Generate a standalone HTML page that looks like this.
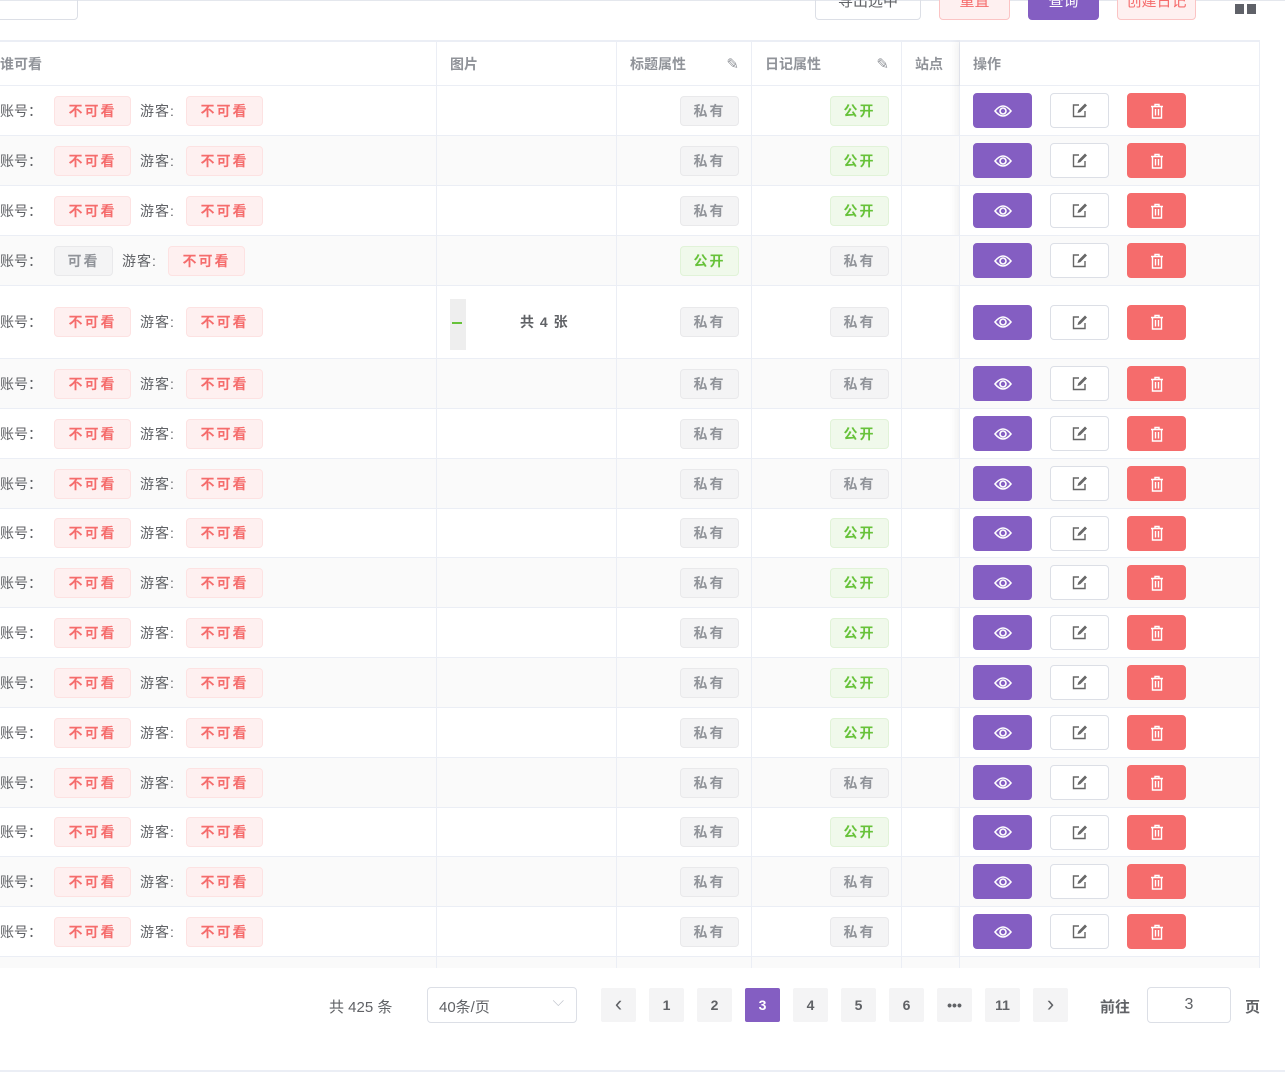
<!DOCTYPE html>
<html><head><meta charset="utf-8"><style>
*{box-sizing:border-box;margin:0;padding:0}
body{width:1285px;height:1073px;background:#fff;font-family:"Liberation Sans","Noto Sans CJK SC",sans-serif;position:relative;overflow:hidden;color:#606266;font-size:14px}
.a{position:absolute}
.tb{position:absolute;top:-14px;height:34px;border-radius:4px;font-size:15px;text-align:center;line-height:30px;border:1px solid}
.tbl{position:absolute;left:0;top:40px;width:1260px;height:928px;border-top:2px solid #ebeef5;border-right:1px solid #ebeef5;overflow:hidden}
.row{position:absolute;left:0;width:1260px;display:flex;border-bottom:1px solid #ebeef5}
.row.g{background:#fafafa}
.c{display:flex;align-items:center;border-right:1px solid #ebeef5;height:100%}
.c1{width:437px}.c2{width:180px}.c3{width:135px;justify-content:flex-end;padding-right:12px}.c4{width:150px;justify-content:flex-end;padding-right:12px}.c5{width:58px}
.c6{width:300px;padding-left:13px;border-right:none;position:relative}
.t{display:inline-block;height:30px;line-height:28px;border-radius:4px;border:1px solid;font-size:14px;letter-spacing:2px;font-weight:bold;text-align:center;padding:0}
.n{color:#f56c6c;background:#fef0f0;border-color:#fde2e2;width:77px}
.p{color:#909399;background:#f4f4f5;border-color:#e9e9eb;width:59px}
.o{color:#67c23a;background:#f0f9eb;border-color:#e1f3d8;width:59px}
.lb{display:inline-block;width:54px;color:#606266;margin:0 !important}
.c1 .t + .lb{width:40px;margin-left:9px !important;margin-right:6px !important;letter-spacing:1px}
.b{width:59px;height:35px;border-radius:4px;display:flex;align-items:center;justify-content:center;margin-right:18px;border:1px solid}
.bv{background:#845ec2;border-color:#845ec2}.be{background:#fff;border-color:#dcdfe6}.bd{background:#f56c6c;border-color:#f56c6c}
.hd{position:absolute;left:0;top:0;height:44px;width:1260px;display:flex;border-bottom:1px solid #ebeef5;font-weight:bold;color:#909399}
.hd .c{padding-left:13px}
.ops{position:absolute;left:960px;top:0;width:300px;height:100%;box-shadow:-4px 0 8px rgba(0,0,0,.06)}
.pg{position:absolute;top:988px;width:35px;height:34px;background:#f4f4f5;border-radius:2px;text-align:center;line-height:34px;font-size:14px;color:#606266;font-weight:bold}
.ar{font-size:22px;font-weight:normal;line-height:32px}
</style></head><body>
<div class="a" style="left:0;top:0;width:1285px;height:1px;background:#e4e7ed"></div>
<div class="a" style="left:-10px;top:-10px;width:88px;height:30px;border:1px solid #dcdfe6;border-radius:4px"></div>
<div class="tb" style="left:815px;width:106px;border-color:#dcdfe6;color:#606266">导出选中</div>
<div class="tb" style="left:939px;width:71px;border-color:#fbc4c4;background:#fef0f0;color:#f56c6c">重置</div>
<div class="tb" style="left:1028px;width:71px;border-color:#845ec2;background:#845ec2;color:#fff">查询</div>
<div class="tb" style="left:1117px;width:79px;border-color:#fbc4c4;background:#fef0f0;color:#f56c6c">创建日记</div>
<div class="a" style="left:1235px;top:4px;width:9px;height:10px;background:#5f6168"></div>
<div class="a" style="left:1247px;top:4px;width:9px;height:10px;background:#5f6168"></div>

<div class="tbl">
<div class="hd"><div class="c c1" style="padding-left:0">谁可看</div><div class="c c2">图片</div><div class="c c3" style="justify-content:space-between">标题属性<span style="font-weight:normal;font-size:15px">✎</span></div><div class="c c4" style="justify-content:space-between">日记属性<span style="font-weight:normal;font-size:15px">✎</span></div><div class="c c5">站点</div><div class="c c6">操作</div></div>
</div>

<div class="a" style="left:0;top:968px;width:1285px;height:105px;background:#fff"></div>
<div class="a" style="left:0;top:1070px;width:1285px;height:2px;background:#ebeef5"></div>
<div class="a" style="left:329px;top:996px;font-size:15px">共 425 条</div>
<div class="a" style="left:427px;top:987px;width:150px;height:36px;border:1px solid #dcdfe6;border-radius:4px;padding:8px 11px;font-size:15px">40条/页<span style="position:absolute;right:12px;top:5px;color:#c0c4cc">⌵</span></div>
<div class="pg ar" style="left:601px">‹</div>
<div class="pg" style="left:649px">1</div>
<div class="pg" style="left:697px">2</div>
<div class="pg" style="left:745px;background:#845ec2;color:#fff">3</div>
<div class="pg" style="left:793px">4</div>
<div class="pg" style="left:841px">5</div>
<div class="pg" style="left:889px">6</div>
<div class="pg" style="left:937px">•••</div>
<div class="pg" style="left:985px">11</div>
<div class="pg ar" style="left:1033px">›</div>
<div class="a" style="left:1100px;top:996px;font-size:15px;font-weight:bold">前往</div>
<div class="a" style="left:1147px;top:987px;width:84px;height:36px;border:1px solid #dcdfe6;border-radius:4px;text-align:center;line-height:34px;font-size:16px">3</div>
<div class="a" style="left:1245px;top:996px;font-size:15px;font-weight:bold">页</div>

<div class="tbl" style="border:none;background:transparent;pointer-events:none">
<div class="ops"></div>
</div>

<div class="tbl" style="border-top:none;background:transparent">
<div class="row" style="top:46px;height:50px"><div class="c c1"><span class="lb">账号：</span><span class="t n">不可看</span><span class="lb">游客:</span><span class="t n">不可看</span></div><div class="c c2"></div><div class="c c3"><span class="t p">私有</span></div><div class="c c4"><span class="t o">公开</span></div><div class="c c5"></div><div class="c c6"><span class="b bv"><svg width="18" height="14" viewBox="0 0 18 14"><path d="M1 7Q9-3 17 7Q9 17 1 7Z" fill="none" stroke="#fff" stroke-width="1.6"/><circle cx="9" cy="7" r="3" fill="none" stroke="#fff" stroke-width="1.6"/></svg></span><span class="b be"><svg width="15" height="15"><path d="M7 2H1.5V13.5H13V8M13 1.5L7 7.5L6.5 9L8 8.5L14 2.5Z" fill="none" stroke="#666" stroke-width="1.4"/></svg></span><span class="b bd"><svg width="14" height="16"><path d="M1 3.5H13M5 3.5V1.5H9V3.5M2.5 3.5V15H11.5V3.5M5.5 6V12.5M8.5 6V12.5" fill="none" stroke="#fff" stroke-width="1.4"/></svg></span></div></div>
<div class="row g" style="top:96px;height:50px"><div class="c c1"><span class="lb">账号：</span><span class="t n">不可看</span><span class="lb">游客:</span><span class="t n">不可看</span></div><div class="c c2"></div><div class="c c3"><span class="t p">私有</span></div><div class="c c4"><span class="t o">公开</span></div><div class="c c5"></div><div class="c c6"><span class="b bv"><svg width="18" height="14" viewBox="0 0 18 14"><path d="M1 7Q9-3 17 7Q9 17 1 7Z" fill="none" stroke="#fff" stroke-width="1.6"/><circle cx="9" cy="7" r="3" fill="none" stroke="#fff" stroke-width="1.6"/></svg></span><span class="b be"><svg width="15" height="15"><path d="M7 2H1.5V13.5H13V8M13 1.5L7 7.5L6.5 9L8 8.5L14 2.5Z" fill="none" stroke="#666" stroke-width="1.4"/></svg></span><span class="b bd"><svg width="14" height="16"><path d="M1 3.5H13M5 3.5V1.5H9V3.5M2.5 3.5V15H11.5V3.5M5.5 6V12.5M8.5 6V12.5" fill="none" stroke="#fff" stroke-width="1.4"/></svg></span></div></div>
<div class="row" style="top:146px;height:50px"><div class="c c1"><span class="lb">账号：</span><span class="t n">不可看</span><span class="lb">游客:</span><span class="t n">不可看</span></div><div class="c c2"></div><div class="c c3"><span class="t p">私有</span></div><div class="c c4"><span class="t o">公开</span></div><div class="c c5"></div><div class="c c6"><span class="b bv"><svg width="18" height="14" viewBox="0 0 18 14"><path d="M1 7Q9-3 17 7Q9 17 1 7Z" fill="none" stroke="#fff" stroke-width="1.6"/><circle cx="9" cy="7" r="3" fill="none" stroke="#fff" stroke-width="1.6"/></svg></span><span class="b be"><svg width="15" height="15"><path d="M7 2H1.5V13.5H13V8M13 1.5L7 7.5L6.5 9L8 8.5L14 2.5Z" fill="none" stroke="#666" stroke-width="1.4"/></svg></span><span class="b bd"><svg width="14" height="16"><path d="M1 3.5H13M5 3.5V1.5H9V3.5M2.5 3.5V15H11.5V3.5M5.5 6V12.5M8.5 6V12.5" fill="none" stroke="#fff" stroke-width="1.4"/></svg></span></div></div>
<div class="row g" style="top:196px;height:50px"><div class="c c1"><span class="lb">账号：</span><span class="t p">可看</span><span class="lb">游客:</span><span class="t n">不可看</span></div><div class="c c2"></div><div class="c c3"><span class="t o">公开</span></div><div class="c c4"><span class="t p">私有</span></div><div class="c c5"></div><div class="c c6"><span class="b bv"><svg width="18" height="14" viewBox="0 0 18 14"><path d="M1 7Q9-3 17 7Q9 17 1 7Z" fill="none" stroke="#fff" stroke-width="1.6"/><circle cx="9" cy="7" r="3" fill="none" stroke="#fff" stroke-width="1.6"/></svg></span><span class="b be"><svg width="15" height="15"><path d="M7 2H1.5V13.5H13V8M13 1.5L7 7.5L6.5 9L8 8.5L14 2.5Z" fill="none" stroke="#666" stroke-width="1.4"/></svg></span><span class="b bd"><svg width="14" height="16"><path d="M1 3.5H13M5 3.5V1.5H9V3.5M2.5 3.5V15H11.5V3.5M5.5 6V12.5M8.5 6V12.5" fill="none" stroke="#fff" stroke-width="1.4"/></svg></span></div></div>
<div class="row" style="top:246px;height:73px"><div class="c c1"><span class="lb">账号：</span><span class="t n">不可看</span><span class="lb">游客:</span><span class="t n">不可看</span></div><div class="c c2" style="padding-left:13px"><span style="display:inline-block;width:16px;height:56px;background:#eee;border-top:5px solid #fff;position:relative"><span style="position:absolute;left:2px;top:23px;width:10px;height:2px;background:#67c23a"></span></span><span style="margin-left:54px;font-weight:bold;letter-spacing:1px">共 4 张</span></div><div class="c c3"><span class="t p">私有</span></div><div class="c c4"><span class="t p">私有</span></div><div class="c c5"></div><div class="c c6"><span class="b bv"><svg width="18" height="14" viewBox="0 0 18 14"><path d="M1 7Q9-3 17 7Q9 17 1 7Z" fill="none" stroke="#fff" stroke-width="1.6"/><circle cx="9" cy="7" r="3" fill="none" stroke="#fff" stroke-width="1.6"/></svg></span><span class="b be"><svg width="15" height="15"><path d="M7 2H1.5V13.5H13V8M13 1.5L7 7.5L6.5 9L8 8.5L14 2.5Z" fill="none" stroke="#666" stroke-width="1.4"/></svg></span><span class="b bd"><svg width="14" height="16"><path d="M1 3.5H13M5 3.5V1.5H9V3.5M2.5 3.5V15H11.5V3.5M5.5 6V12.5M8.5 6V12.5" fill="none" stroke="#fff" stroke-width="1.4"/></svg></span></div></div>
<div class="row g" style="top:319px;height:50px"><div class="c c1"><span class="lb">账号：</span><span class="t n">不可看</span><span class="lb">游客:</span><span class="t n">不可看</span></div><div class="c c2"></div><div class="c c3"><span class="t p">私有</span></div><div class="c c4"><span class="t p">私有</span></div><div class="c c5"></div><div class="c c6"><span class="b bv"><svg width="18" height="14" viewBox="0 0 18 14"><path d="M1 7Q9-3 17 7Q9 17 1 7Z" fill="none" stroke="#fff" stroke-width="1.6"/><circle cx="9" cy="7" r="3" fill="none" stroke="#fff" stroke-width="1.6"/></svg></span><span class="b be"><svg width="15" height="15"><path d="M7 2H1.5V13.5H13V8M13 1.5L7 7.5L6.5 9L8 8.5L14 2.5Z" fill="none" stroke="#666" stroke-width="1.4"/></svg></span><span class="b bd"><svg width="14" height="16"><path d="M1 3.5H13M5 3.5V1.5H9V3.5M2.5 3.5V15H11.5V3.5M5.5 6V12.5M8.5 6V12.5" fill="none" stroke="#fff" stroke-width="1.4"/></svg></span></div></div>
<div class="row" style="top:369px;height:50px"><div class="c c1"><span class="lb">账号：</span><span class="t n">不可看</span><span class="lb">游客:</span><span class="t n">不可看</span></div><div class="c c2"></div><div class="c c3"><span class="t p">私有</span></div><div class="c c4"><span class="t o">公开</span></div><div class="c c5"></div><div class="c c6"><span class="b bv"><svg width="18" height="14" viewBox="0 0 18 14"><path d="M1 7Q9-3 17 7Q9 17 1 7Z" fill="none" stroke="#fff" stroke-width="1.6"/><circle cx="9" cy="7" r="3" fill="none" stroke="#fff" stroke-width="1.6"/></svg></span><span class="b be"><svg width="15" height="15"><path d="M7 2H1.5V13.5H13V8M13 1.5L7 7.5L6.5 9L8 8.5L14 2.5Z" fill="none" stroke="#666" stroke-width="1.4"/></svg></span><span class="b bd"><svg width="14" height="16"><path d="M1 3.5H13M5 3.5V1.5H9V3.5M2.5 3.5V15H11.5V3.5M5.5 6V12.5M8.5 6V12.5" fill="none" stroke="#fff" stroke-width="1.4"/></svg></span></div></div>
<div class="row g" style="top:419px;height:50px"><div class="c c1"><span class="lb">账号：</span><span class="t n">不可看</span><span class="lb">游客:</span><span class="t n">不可看</span></div><div class="c c2"></div><div class="c c3"><span class="t p">私有</span></div><div class="c c4"><span class="t p">私有</span></div><div class="c c5"></div><div class="c c6"><span class="b bv"><svg width="18" height="14" viewBox="0 0 18 14"><path d="M1 7Q9-3 17 7Q9 17 1 7Z" fill="none" stroke="#fff" stroke-width="1.6"/><circle cx="9" cy="7" r="3" fill="none" stroke="#fff" stroke-width="1.6"/></svg></span><span class="b be"><svg width="15" height="15"><path d="M7 2H1.5V13.5H13V8M13 1.5L7 7.5L6.5 9L8 8.5L14 2.5Z" fill="none" stroke="#666" stroke-width="1.4"/></svg></span><span class="b bd"><svg width="14" height="16"><path d="M1 3.5H13M5 3.5V1.5H9V3.5M2.5 3.5V15H11.5V3.5M5.5 6V12.5M8.5 6V12.5" fill="none" stroke="#fff" stroke-width="1.4"/></svg></span></div></div>
<div class="row" style="top:469px;height:49px"><div class="c c1"><span class="lb">账号：</span><span class="t n">不可看</span><span class="lb">游客:</span><span class="t n">不可看</span></div><div class="c c2"></div><div class="c c3"><span class="t p">私有</span></div><div class="c c4"><span class="t o">公开</span></div><div class="c c5"></div><div class="c c6"><span class="b bv"><svg width="18" height="14" viewBox="0 0 18 14"><path d="M1 7Q9-3 17 7Q9 17 1 7Z" fill="none" stroke="#fff" stroke-width="1.6"/><circle cx="9" cy="7" r="3" fill="none" stroke="#fff" stroke-width="1.6"/></svg></span><span class="b be"><svg width="15" height="15"><path d="M7 2H1.5V13.5H13V8M13 1.5L7 7.5L6.5 9L8 8.5L14 2.5Z" fill="none" stroke="#666" stroke-width="1.4"/></svg></span><span class="b bd"><svg width="14" height="16"><path d="M1 3.5H13M5 3.5V1.5H9V3.5M2.5 3.5V15H11.5V3.5M5.5 6V12.5M8.5 6V12.5" fill="none" stroke="#fff" stroke-width="1.4"/></svg></span></div></div>
<div class="row g" style="top:518px;height:50px"><div class="c c1"><span class="lb">账号：</span><span class="t n">不可看</span><span class="lb">游客:</span><span class="t n">不可看</span></div><div class="c c2"></div><div class="c c3"><span class="t p">私有</span></div><div class="c c4"><span class="t o">公开</span></div><div class="c c5"></div><div class="c c6"><span class="b bv"><svg width="18" height="14" viewBox="0 0 18 14"><path d="M1 7Q9-3 17 7Q9 17 1 7Z" fill="none" stroke="#fff" stroke-width="1.6"/><circle cx="9" cy="7" r="3" fill="none" stroke="#fff" stroke-width="1.6"/></svg></span><span class="b be"><svg width="15" height="15"><path d="M7 2H1.5V13.5H13V8M13 1.5L7 7.5L6.5 9L8 8.5L14 2.5Z" fill="none" stroke="#666" stroke-width="1.4"/></svg></span><span class="b bd"><svg width="14" height="16"><path d="M1 3.5H13M5 3.5V1.5H9V3.5M2.5 3.5V15H11.5V3.5M5.5 6V12.5M8.5 6V12.5" fill="none" stroke="#fff" stroke-width="1.4"/></svg></span></div></div>
<div class="row" style="top:568px;height:50px"><div class="c c1"><span class="lb">账号：</span><span class="t n">不可看</span><span class="lb">游客:</span><span class="t n">不可看</span></div><div class="c c2"></div><div class="c c3"><span class="t p">私有</span></div><div class="c c4"><span class="t o">公开</span></div><div class="c c5"></div><div class="c c6"><span class="b bv"><svg width="18" height="14" viewBox="0 0 18 14"><path d="M1 7Q9-3 17 7Q9 17 1 7Z" fill="none" stroke="#fff" stroke-width="1.6"/><circle cx="9" cy="7" r="3" fill="none" stroke="#fff" stroke-width="1.6"/></svg></span><span class="b be"><svg width="15" height="15"><path d="M7 2H1.5V13.5H13V8M13 1.5L7 7.5L6.5 9L8 8.5L14 2.5Z" fill="none" stroke="#666" stroke-width="1.4"/></svg></span><span class="b bd"><svg width="14" height="16"><path d="M1 3.5H13M5 3.5V1.5H9V3.5M2.5 3.5V15H11.5V3.5M5.5 6V12.5M8.5 6V12.5" fill="none" stroke="#fff" stroke-width="1.4"/></svg></span></div></div>
<div class="row g" style="top:618px;height:50px"><div class="c c1"><span class="lb">账号：</span><span class="t n">不可看</span><span class="lb">游客:</span><span class="t n">不可看</span></div><div class="c c2"></div><div class="c c3"><span class="t p">私有</span></div><div class="c c4"><span class="t o">公开</span></div><div class="c c5"></div><div class="c c6"><span class="b bv"><svg width="18" height="14" viewBox="0 0 18 14"><path d="M1 7Q9-3 17 7Q9 17 1 7Z" fill="none" stroke="#fff" stroke-width="1.6"/><circle cx="9" cy="7" r="3" fill="none" stroke="#fff" stroke-width="1.6"/></svg></span><span class="b be"><svg width="15" height="15"><path d="M7 2H1.5V13.5H13V8M13 1.5L7 7.5L6.5 9L8 8.5L14 2.5Z" fill="none" stroke="#666" stroke-width="1.4"/></svg></span><span class="b bd"><svg width="14" height="16"><path d="M1 3.5H13M5 3.5V1.5H9V3.5M2.5 3.5V15H11.5V3.5M5.5 6V12.5M8.5 6V12.5" fill="none" stroke="#fff" stroke-width="1.4"/></svg></span></div></div>
<div class="row" style="top:668px;height:50px"><div class="c c1"><span class="lb">账号：</span><span class="t n">不可看</span><span class="lb">游客:</span><span class="t n">不可看</span></div><div class="c c2"></div><div class="c c3"><span class="t p">私有</span></div><div class="c c4"><span class="t o">公开</span></div><div class="c c5"></div><div class="c c6"><span class="b bv"><svg width="18" height="14" viewBox="0 0 18 14"><path d="M1 7Q9-3 17 7Q9 17 1 7Z" fill="none" stroke="#fff" stroke-width="1.6"/><circle cx="9" cy="7" r="3" fill="none" stroke="#fff" stroke-width="1.6"/></svg></span><span class="b be"><svg width="15" height="15"><path d="M7 2H1.5V13.5H13V8M13 1.5L7 7.5L6.5 9L8 8.5L14 2.5Z" fill="none" stroke="#666" stroke-width="1.4"/></svg></span><span class="b bd"><svg width="14" height="16"><path d="M1 3.5H13M5 3.5V1.5H9V3.5M2.5 3.5V15H11.5V3.5M5.5 6V12.5M8.5 6V12.5" fill="none" stroke="#fff" stroke-width="1.4"/></svg></span></div></div>
<div class="row g" style="top:718px;height:50px"><div class="c c1"><span class="lb">账号：</span><span class="t n">不可看</span><span class="lb">游客:</span><span class="t n">不可看</span></div><div class="c c2"></div><div class="c c3"><span class="t p">私有</span></div><div class="c c4"><span class="t p">私有</span></div><div class="c c5"></div><div class="c c6"><span class="b bv"><svg width="18" height="14" viewBox="0 0 18 14"><path d="M1 7Q9-3 17 7Q9 17 1 7Z" fill="none" stroke="#fff" stroke-width="1.6"/><circle cx="9" cy="7" r="3" fill="none" stroke="#fff" stroke-width="1.6"/></svg></span><span class="b be"><svg width="15" height="15"><path d="M7 2H1.5V13.5H13V8M13 1.5L7 7.5L6.5 9L8 8.5L14 2.5Z" fill="none" stroke="#666" stroke-width="1.4"/></svg></span><span class="b bd"><svg width="14" height="16"><path d="M1 3.5H13M5 3.5V1.5H9V3.5M2.5 3.5V15H11.5V3.5M5.5 6V12.5M8.5 6V12.5" fill="none" stroke="#fff" stroke-width="1.4"/></svg></span></div></div>
<div class="row" style="top:768px;height:49px"><div class="c c1"><span class="lb">账号：</span><span class="t n">不可看</span><span class="lb">游客:</span><span class="t n">不可看</span></div><div class="c c2"></div><div class="c c3"><span class="t p">私有</span></div><div class="c c4"><span class="t o">公开</span></div><div class="c c5"></div><div class="c c6"><span class="b bv"><svg width="18" height="14" viewBox="0 0 18 14"><path d="M1 7Q9-3 17 7Q9 17 1 7Z" fill="none" stroke="#fff" stroke-width="1.6"/><circle cx="9" cy="7" r="3" fill="none" stroke="#fff" stroke-width="1.6"/></svg></span><span class="b be"><svg width="15" height="15"><path d="M7 2H1.5V13.5H13V8M13 1.5L7 7.5L6.5 9L8 8.5L14 2.5Z" fill="none" stroke="#666" stroke-width="1.4"/></svg></span><span class="b bd"><svg width="14" height="16"><path d="M1 3.5H13M5 3.5V1.5H9V3.5M2.5 3.5V15H11.5V3.5M5.5 6V12.5M8.5 6V12.5" fill="none" stroke="#fff" stroke-width="1.4"/></svg></span></div></div>
<div class="row g" style="top:817px;height:50px"><div class="c c1"><span class="lb">账号：</span><span class="t n">不可看</span><span class="lb">游客:</span><span class="t n">不可看</span></div><div class="c c2"></div><div class="c c3"><span class="t p">私有</span></div><div class="c c4"><span class="t p">私有</span></div><div class="c c5"></div><div class="c c6"><span class="b bv"><svg width="18" height="14" viewBox="0 0 18 14"><path d="M1 7Q9-3 17 7Q9 17 1 7Z" fill="none" stroke="#fff" stroke-width="1.6"/><circle cx="9" cy="7" r="3" fill="none" stroke="#fff" stroke-width="1.6"/></svg></span><span class="b be"><svg width="15" height="15"><path d="M7 2H1.5V13.5H13V8M13 1.5L7 7.5L6.5 9L8 8.5L14 2.5Z" fill="none" stroke="#666" stroke-width="1.4"/></svg></span><span class="b bd"><svg width="14" height="16"><path d="M1 3.5H13M5 3.5V1.5H9V3.5M2.5 3.5V15H11.5V3.5M5.5 6V12.5M8.5 6V12.5" fill="none" stroke="#fff" stroke-width="1.4"/></svg></span></div></div>
<div class="row" style="top:867px;height:50px"><div class="c c1"><span class="lb">账号：</span><span class="t n">不可看</span><span class="lb">游客:</span><span class="t n">不可看</span></div><div class="c c2"></div><div class="c c3"><span class="t p">私有</span></div><div class="c c4"><span class="t p">私有</span></div><div class="c c5"></div><div class="c c6"><span class="b bv"><svg width="18" height="14" viewBox="0 0 18 14"><path d="M1 7Q9-3 17 7Q9 17 1 7Z" fill="none" stroke="#fff" stroke-width="1.6"/><circle cx="9" cy="7" r="3" fill="none" stroke="#fff" stroke-width="1.6"/></svg></span><span class="b be"><svg width="15" height="15"><path d="M7 2H1.5V13.5H13V8M13 1.5L7 7.5L6.5 9L8 8.5L14 2.5Z" fill="none" stroke="#666" stroke-width="1.4"/></svg></span><span class="b bd"><svg width="14" height="16"><path d="M1 3.5H13M5 3.5V1.5H9V3.5M2.5 3.5V15H11.5V3.5M5.5 6V12.5M8.5 6V12.5" fill="none" stroke="#fff" stroke-width="1.4"/></svg></span></div></div>
<div class="row g" style="top:917px;height:40px;border-bottom:none"><div class="c c1"></div><div class="c c2"></div><div class="c c3"></div><div class="c c4"></div><div class="c c5"></div><div class="c c6"></div></div>
</div>
</body></html>
